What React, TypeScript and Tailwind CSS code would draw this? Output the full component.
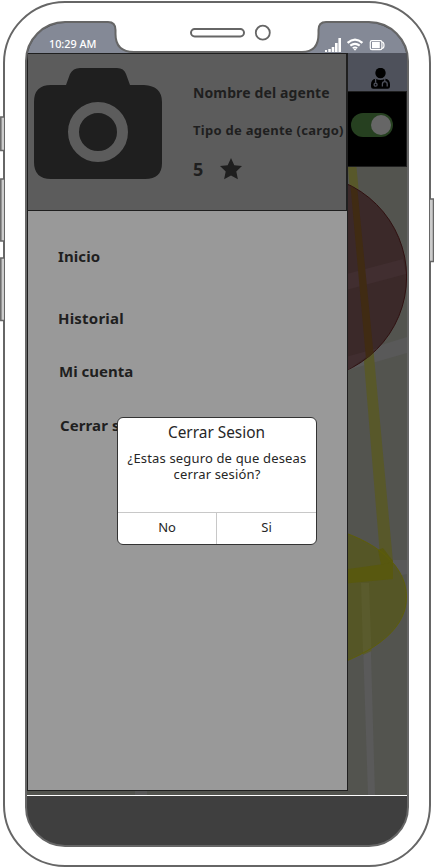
const menu = [
  { label: "Inicio", style: "ml-[30px] mt-[35px] tracking-[0.1px]" },
  { label: "Historial", style: "ml-[30px] mt-[42px] tracking-[0.2px]" },
  { label: "Mi cuenta", style: "ml-[31px] mt-[33px]" },
  { label: "Cerrar sesión", style: "ml-8 mt-[34px] tracking-[0.1px]" },
];

function CameraIcon() {
  return (
    <svg width="128" height="112" viewBox="0 0 128 112" className="shrink-0">
      <path
        d="M17 17H32L36 6Q39 0 46 0H83Q90 0 92 6L96 17H110Q128 18 128 34V95Q128 111 111 111H17Q0 111 0 94V34Q0 17 17 17Z"
        fill="#1f1f1f"
      />
      <circle cx="64" cy="64" r="24.5" fill="#1f1f1f" stroke="#5c5c5c" strokeWidth="11" />
    </svg>
  );
}

function StarIcon() {
  return (
    <svg width="22" height="22" viewBox="0 0 22 22">
      <path
        d="M11 0L14.3 7.2L22 8.1L16.3 13.5L17.9 21.3L11 17.5L4.1 21.3L5.7 13.5L0 8.1L7.7 7.2Z"
        fill="#1f1f1f"
      />
    </svg>
  );
}

function DoctorIcon() {
  return (
    <svg width="19" height="21" viewBox="0 0 19 21">
      <circle cx="9.500" cy="5" r="5.200" fill="#000" />
      <path d="M4.800 10.800Q9.500 13.200 14.200 10.800Q19 11.500 19 16.500V18.500Q19 20.700 16.800 20.700H2.200Q0 20.700 0 18.500V16.500Q0 11.500 4.800 10.800Z" fill="#000" />
      <g fill="none" stroke="#4e515b" strokeWidth="1.300">
        <path d="M4.600 10.500V14.800M13.800 10.500V13.400" />
        <circle cx="4.600" cy="16.700" r="1.500" />
        <path d="M11.400 18.500V16Q11.400 13.700 13.800 13.700Q16.200 13.700 16.200 16V18.500" />
      </g>
    </svg>
  );
}

function StatusIcons() {
  return (
    <svg width="61" height="15" viewBox="0 0 61 15" fill="#fff">
      <path d="M0 12h2v2H0zM3.3 11h2.5v3H3.3zM6.700 9h2.600v5H6.700zM10 5h2.600v9H10zM13.400 0H16v14h-2.600z" />
      <g fill="none" stroke="#fff" strokeWidth="2.200">
        <path d="M22.600 4.900Q30 -1.500 37.400 4.900" />
        <path d="M25.300 7.700Q30 4 34.700 7.700" />
        <path d="M27.700 10.100Q30 8.500 32.300 10.100" strokeWidth="1.700" />
      </g>
      <path d="M28.300 10.800H31.700L30 12.700Z" />
      <rect x="45.300" y="2.600" width="11.600" height="9" rx="1.600" fill="none" stroke="#fff" strokeWidth="1.200" />
      <rect x="47" y="4" width="7.800" height="6.200" />
      <path d="M57 4Q59 4 59 7.200Q59 10.400 57 10.400" fill="none" stroke="#fff" strokeWidth="1.200" />
    </svg>
  );
}

function MapArea() {
  return (
    <svg className="absolute inset-0" width="380" height="742" viewBox="27 53 380 742">
      <rect x="27" y="53" width="380" height="742" fill="#53544f" />
      <path d="M320 364L407 337V353L320 378ZM393 564V560H407V574L384 579Z" fill="#595959" />
      <path d="M361 583H369L375 795H368Z" fill="#5a5a5a" />
      <path d="M135 791H147V795H135Z" fill="#5a5a5a" />
      <path d="M348 167H356.500L393 562V580H382Z" fill="#58582a" />
      <circle cx="304" cy="277" r="102.600" fill="#3b2929" stroke="#301010" />
      <path d="M320 281L403 259L406 274L320 297ZM320 364L378 348L362 360L348 370L320 377Z" fill="#412e30" />
      <path d="M350.500 186L357.500 190.500L373.500 353L366 359Z" fill="#402b13" />
      <path d="M320 526C365 535 406.500 560 406.500 597S365 656 320 671Z" fill="#555626" />
      <path d="M378 550L383 548L393 561V579L384 579Z" fill="#58580f" />
      <path d="M361 583H369L371.500 651L363 655Z" fill="#5a5b2d" />
      <path d="M320 573L384 564L393 562V579L320 586Z" fill="#58580f" />
      <path d="M320 526C365 535 406.500 560 406.500 597S365 656 320 671" fill="none" stroke="#5e5e08" />
    </svg>
  );
}

function Dialog() {
  return (
    <div className="absolute left-[117px] top-[417px] flex h-32 w-[200px] flex-col overflow-hidden rounded-[6px] border border-[#333] bg-white text-center text-[#262626]">
      <h2 className="h-[31px] pr-[1px] pt-[3px] text-[15.4px] leading-6">Cerrar Sesion</h2>
      <p className="h-[63px] pt-[1px] text-[13px] leading-4 tracking-[0.16px]">
        ¿Estas seguro de que deseas cerrar sesión?
      </p>
      <div className="flex flex-1 items-start border-t border-[#c8c8c8] text-[13px] leading-[28px]">
        <button className="h-full w-[99px] border-r border-[#c8c8c8] pb-[3px]">No</button>
        <button className="h-full flex-1 pb-[3px]">Si</button>
      </div>
    </div>
  );
}

function FrameDetails() {
  return (
    <svg className="pointer-events-none absolute inset-0" width="434" height="867" viewBox="0 0 434 867">
      <path d="M108 20V22Q115.500 22 115.500 30V34Q115.500 52 134 52H302Q318.500 52 318.500 34V30Q318.500 22 326 22V20Z" fill="#fff" />
      <path d="M107 22H108Q115.500 22 115.500 30V34Q115.500 52 134 52H302Q318.500 52 318.500 34V30Q318.500 22 326 22H327" fill="none" stroke="#666" strokeWidth="2" />
      <rect x="191" y="29" width="53" height="7.500" rx="3.700" fill="#fff" stroke="#666" strokeWidth="2" />
      <circle cx="262.800" cy="32.700" r="7" fill="#fff" stroke="#666" strokeWidth="1.800" />
      <g fill="#ccc" stroke="#666" strokeWidth="1.500">
        <path d="M4 117H.8V150.500H4M4 179H.8V241H4M4 258H.8V320.500H4" />
        <path d="M430 199H433.500V261.500H430" />
      </g>
    </svg>
  );
}

export default function App() {
  return (
    <div className="relative h-[867px] w-[434px] overflow-hidden bg-white pl-[3px] pt-[1px] font-['Noto_Sans','Open_Sans',sans-serif]">
      <div className="h-[866px] w-[428px] rounded-[62px] border-2 border-[#666] pl-5 pt-[18px]">
        <div className="flex h-[826px] w-[384px] flex-col overflow-hidden rounded-[40px] border-2 border-[#666] bg-[#3f3f3f]">
          <header className="flex h-[30px] shrink-0 items-start justify-between bg-[#848996] pl-[22px] pr-[21px]">
            <span className="mt-[13px] text-[10.8px] font-medium leading-4 text-white">10:29 AM</span>
            <span className="mt-[15px]">
              <StatusIcons />
            </span>
          </header>
          <main className="relative h-[742px] shrink-0">
            <MapArea />
            <div className="relative flex">
              <aside className="h-[738px] w-[321px] border border-[#1f1f1f] bg-[#999] text-[#1f1f1f]">
                <section className="flex h-[157px] border-b border-r border-[#1f1f1f] bg-[#5c5c5c] pl-[6px] pt-[14px]">
                  <CameraIcon />
                  <div className="ml-[31px] whitespace-nowrap font-bold">
                    <p className="mt-[15px] text-[14px] leading-5 tracking-[0.12px]">Nombre del agente</p>
                    <p className="mt-[17px] text-[13px] leading-5 tracking-[0.27px]">Tipo de agente (cargo)</p>
                    <div className="mt-[17px] flex h-6 items-center gap-[17px]">
                      <span className="text-[18px] leading-6">5</span>
                      <StarIcon />
                    </div>
                  </div>
                </section>
                <nav>
                  {menu.map((m) => (
                    <a key={m.label} className={`block h-5 text-[15px] font-bold leading-5 ${m.style}`}>
                      {m.label}
                    </a>
                  ))}
                </nav>
              </aside>
              <div className="flex-1">
                <div className="flex h-[38px] justify-end bg-[#4e515b] pr-[17px] pt-[15px]">
                  <DoctorIcon />
                </div>
                <div className="h-[76px] border border-l-0 border-[#1f1f1f] bg-black pl-[3px] pt-[21px]">
                  <div className="flex h-6 w-[42px] items-center justify-end rounded-full bg-[#264020] pr-[2px]">
                    <span className="size-5 rounded-full bg-[#666]" />
                  </div>
                </div>
              </div>
            </div>
          </main>
          <div className="h-px shrink-0 bg-white" />
        </div>
      </div>
      <FrameDetails />
      <Dialog />
    </div>
  );
}
